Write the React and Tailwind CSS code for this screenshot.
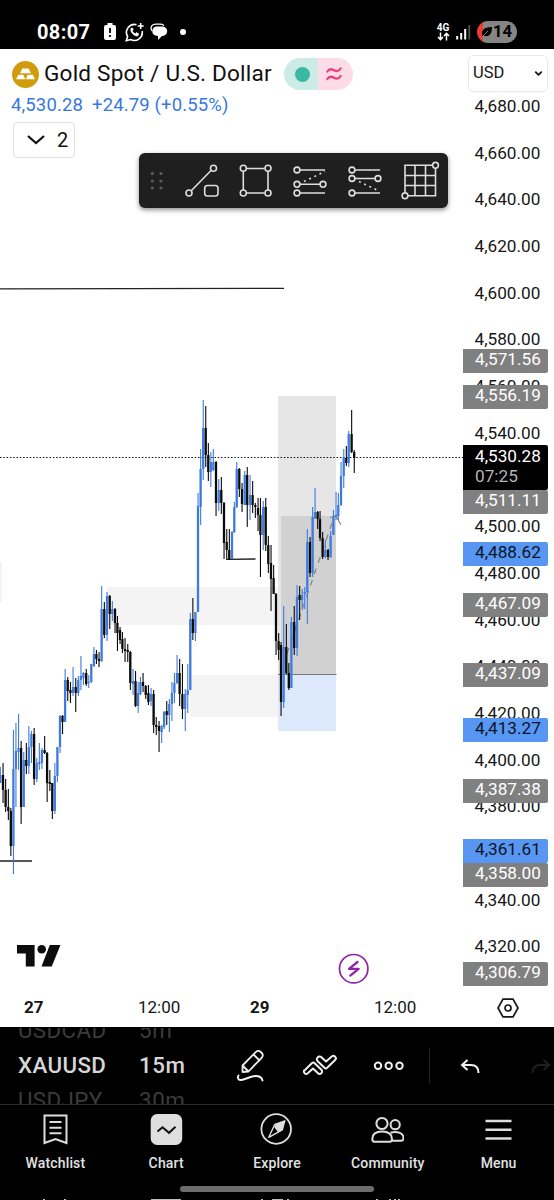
// App.jsx

import { ChevronDown } from 'lucide-react';

// x, high, low, body top, body bottom, direction (1 = up, 0 = down)
const candles = [
  [0.3, 767, 783, 775, 783, 1], [3, 763, 803, 775, 790, 0], [5.6, 779, 812, 790, 807, 0],
  [8.3, 789, 820, 807, 811, 0], [10.8, 808, 856, 811, 846, 0], [13.4, 730, 874, 769, 846, 1],
  [15.9, 723, 807, 751, 769, 1], [18.5, 714, 770, 748, 752, 1], [21.1, 741, 824, 748, 807, 0],
  [23.7, 752, 807, 760, 807, 1], [26.3, 743, 774, 760, 766, 0], [28.8, 726, 774, 747, 766, 1],
  [31.4, 731, 763, 734, 747, 1], [34.1, 728, 785, 734, 779, 0], [36.7, 758, 782, 763, 779, 1],
  [39.3, 743, 770, 762, 764, 1], [41.9, 748, 769, 750, 763, 1], [44.6, 736, 754, 750, 753, 0],
  [47.1, 752, 802, 753, 783, 0], [49.8, 770, 791, 782, 784, 0], [52.3, 783, 819, 783, 811, 0],
  [54.8, 763, 814, 776, 811, 1], [57.4, 747, 782, 747, 776, 1], [60, 715, 753, 716, 747, 1],
  [62.5, 715, 734, 716, 722, 0], [65.1, 669, 722, 680, 722, 1], [67.7, 677, 701, 680, 691, 0],
  [70.4, 682, 703, 690, 693, 0], [73, 667, 696, 687, 693, 1], [75.7, 678, 712, 687, 693, 0],
  [78.3, 676, 696, 680, 693, 1], [80.9, 656, 690, 676, 680, 1], [83.4, 672, 685, 673, 678, 1],
  [86.2, 669, 686, 673, 684, 0], [88.7, 675, 688, 682, 683, 1], [91.3, 664, 683, 664, 682, 1],
  [93.9, 647, 667, 654, 666, 1], [96.4, 650, 664, 654, 659, 0], [99, 652, 667, 659, 661, 0],
  [101.6, 586, 662, 609, 661, 1], [104.3, 602, 638, 609, 635, 0], [107, 592, 641, 596, 635, 1],
  [109.7, 595, 629, 596, 614, 0], [112.3, 601, 621, 609, 614, 1], [115, 608, 633, 609, 623, 0],
  [117.4, 616, 651, 623, 633, 0], [120, 627, 644, 630, 640, 0], [122.4, 632, 653, 639, 649, 0],
  [125, 638, 662, 649, 651, 0], [127.7, 644, 662, 650, 652, 0], [130.3, 651, 690, 652, 683, 0],
  [133, 669, 695, 681, 684, 1], [135.5, 671, 707, 681, 706, 0], [138.1, 682, 713, 693, 706, 1],
  [140.4, 677, 695, 682, 694, 1], [143, 673, 692, 682, 686, 0], [145.7, 685, 699, 686, 695, 0],
  [148.4, 685, 705, 693, 702, 0], [151, 688, 706, 694, 701, 1], [153.6, 690, 733, 694, 725, 0],
  [156.2, 717, 735, 725, 727, 0], [159, 721, 752, 726, 731, 0], [161.6, 725, 743, 726, 732, 1],
  [164.1, 711, 729, 712, 727, 1], [166.7, 701, 725, 711, 715, 0], [169.3, 699, 732, 704, 715, 1],
  [171.9, 682, 721, 693, 704, 1], [174.4, 673, 703, 683, 693, 1], [177, 655, 684, 673, 683, 1],
  [179.6, 659, 706, 673, 694, 0], [182.4, 664, 719, 694, 709, 0], [185.2, 689, 731, 694, 709, 1],
  [187.7, 664, 713, 690, 695, 1], [190.3, 613, 690, 619, 690, 1], [192.8, 598, 640, 619, 633, 0],
  [195.4, 612, 641, 612, 633, 1], [198, 493, 612, 506, 612, 1], [200.6, 449, 525, 469, 507, 1],
  [203.2, 400, 480, 428, 469, 1], [205.7, 406, 467, 428, 455, 0], [208.3, 443, 481, 455, 472, 0],
  [210.8, 452, 487, 462, 472, 1], [213.3, 449, 471, 462, 470, 1], [216, 461, 516, 462, 503, 0],
  [218.7, 479, 511, 490, 503, 1], [221.3, 477, 514, 490, 503, 0], [224, 502, 559, 503, 543, 0],
  [226.7, 529, 560, 542, 550, 0], [229.3, 529, 560, 550, 559, 0], [232, 531, 559, 532, 559, 1],
  [234.3, 502, 533, 507, 532, 1], [236.7, 462, 508, 469, 507, 1], [239.3, 468, 497, 469, 489, 0],
  [242, 483, 512, 489, 504, 0], [244.7, 471, 505, 475, 505, 1], [247.2, 467, 527, 475, 505, 0],
  [250, 475, 520, 495, 505, 1], [252.6, 481, 513, 495, 505, 0], [255.3, 503, 518, 505, 507, 0],
  [258, 498, 531, 508, 515, 0], [260.4, 498, 577, 515, 535, 0], [263.2, 501, 550, 507, 535, 1],
  [265.7, 498, 551, 507, 545, 0], [268.3, 536, 573, 545, 564, 0], [271, 545, 611, 563, 579, 0],
  [273.6, 565, 594, 578, 594, 0], [276, 593, 655, 594, 641, 0], [278.6, 633, 660, 641, 650, 0],
  [281, 642, 716, 645, 702, 0], [283.6, 606, 708, 647, 702, 1], [286.3, 624, 674, 647, 673, 0],
  [288.8, 663, 690, 673, 688, 0], [291.4, 617, 688, 622, 688, 1], [294.2, 606, 655, 622, 648, 0],
  [297, 585, 656, 597, 648, 1], [299.6, 586, 620, 595, 600, 0], [302.1, 589, 610, 595, 600, 1],
  [304.7, 587, 609, 592, 594, 1], [307.3, 529, 624, 542, 592, 1], [310, 537, 577, 542, 573, 0],
  [312.6, 507, 577, 517, 573, 1], [315, 488, 519, 512, 518, 1], [317.6, 511, 529, 512, 519, 0],
  [320, 511, 541, 519, 538, 0], [322.6, 532, 559, 538, 557, 0], [325.3, 540, 558, 550, 557, 1],
  [328, 549, 560, 550, 557, 0], [330.6, 531, 558, 536, 557, 1], [333.4, 510, 535, 517, 535, 1],
  [336, 492, 520, 515, 517, 1], [338.3, 493, 520, 505, 516, 1], [341, 462, 506, 476, 505, 1],
  [343.7, 449, 488, 457, 476, 1], [346.3, 446, 466, 458, 463, 0], [348.7, 431, 467, 434, 463, 1],
  [351.6, 410, 453, 434, 452, 0], [354.2, 450, 473, 452, 458, 0],
];

const ticks = [
  '4,680.00', '4,660.00', '4,640.00', '4,620.00', '4,600.00', '4,580.00', '4,560.00',
  '4,540.00', '4,520.00', '4,500.00', '4,480.00', '4,460.00', '4,440.00', '4,420.00',
  '4,400.00', '4,380.00', '4,360.00', '4,340.00', '4,320.00',
];

// top is measured from the top of the price scale
const levels = [
  { price: '4,571.56', top: 300, blue: false },
  { price: '4,556.19', top: 336, blue: false },
  { price: '4,511.11', top: 441, blue: false },
  { price: '4,488.62', top: 493, blue: true },
  { price: '4,467.09', top: 543.5, blue: false },
  { price: '4,437.09', top: 614, blue: false },
  { price: '4,413.27', top: 669, blue: true },
  { price: '4,387.38', top: 729.5, blue: false },
  { price: '4,358.00', top: 814, blue: false },
  { price: '4,361.61', top: 789.5, blue: true },
  { price: '4,306.79', top: 913, blue: false },
];

const StatusBar = () => (
  <div className="flex h-[49px] items-center bg-black pl-[37px] pr-[37px] pt-[15px] text-white">
    <span className="w-[54px] whitespace-nowrap text-[20px] font-bold leading-[24px] tracking-[0.350px]">08:07</span>
    <svg className="ml-[13px]" width="12" height="18" viewBox="0 0 12 18">
      <path d="M3.500 0h5v2H10a2 2 0 0 1 2 2v11a2 2 0 0 1-2 2H2a2 2 0 0 1-2-2V4a2 2 0 0 1 2-2h1.500z" fill="#fff" />
      <path d="M6 5v5M6 12v2" stroke="#000" strokeWidth="1.800" />
    </svg>
    <svg className="ml-[9px]" width="19" height="19" viewBox="0 0 19 19" fill="none" stroke="#fff">
      <path d="M11.500 1.700A8 8 0 0 0 2.600 13.500L1.300 17.700l4.400-1.200A8 8 0 0 0 17.200 8" strokeWidth="1.600" />
      <path d="M6 5.200c-1.500 3.300 3.200 8.700 7 7.600l.7-2-2.200-1.200-1.300 1.100C8.700 10 7.800 9 7.300 7.800l1-1.100L7.500 5z" fill="#fff" strokeWidth="0.600" />
      <path d="M15.700 0v6M12.700 3h6" strokeWidth="1.600" />
    </svg>
    <svg className="ml-[6px]" width="18" height="18" viewBox="0 0 18 18">
      <path d="M2 8C-.5 3.500 2.500 1.200 6 1.200h4c2 0 3 .4 4 1.200" fill="none" stroke="#fff" strokeWidth="1.300" />
      <path d="M7 3.500h4.500c3.500 0 5.700 2 5.700 4.700 0 2.700-2.200 4.600-5.200 4.800L8 17V13C4.500 13 2.300 11 2.300 8.300S4 3.500 7 3.500z" fill="#fff" />
    </svg>
    <span className="ml-[12px] h-[6px] w-[6px] rounded-full bg-white" />
    <div className="ml-auto flex w-[14px] flex-col items-center">
      <span className="text-[10px] font-bold leading-[9px]">4G</span>
      <svg width="13" height="9" viewBox="0 0 13 9" fill="none" stroke="#fff" strokeWidth="1.500">
        <path d="M3.500 0.500v7M1 5l2.500 2.600L6 5M9.500 8.500v-7M7 4l2.500-2.600L12 4" />
      </svg>
    </div>
    <svg className="ml-[6px]" width="15" height="16" viewBox="0 0 15 16">
      <path d="M1.200 12v3.500M5.200 9v6.500M9.200 5v10.500" stroke="#fff" strokeWidth="2" />
      <path d="M13.300 1v14.500" stroke="#4b544b" strokeWidth="1.800" />
    </svg>
    <div className="ml-[6px] flex h-[22px] w-[40px] items-center overflow-hidden rounded-full bg-[linear-gradient(90deg,#ee3b33_6px,#858585_6px)]">
      <svg className="ml-[4px]" width="12" height="12" viewBox="0 0 12 12">
        <path d="M1.500 10C0 5 2 1 11 1c0 6-2 10-7.500 9z" fill="#000" />
        <path d="M0.500 11.500L7 5" stroke="#858585" strokeWidth="1" />
      </svg>
      <span className="text-[16.500px] font-bold leading-[22px] text-black">14</span>
    </div>
  </div>
);

const Plot = () => (
  <svg className="absolute left-0 top-0" width="463" height="978" viewBox="0 49 463 978">
    {/* zones */}
    <g shapeRendering="crispEdges">
      <rect x="0" y="562" width="2" height="40" fill="#f4f4f4" />
      <rect x="107" y="587" width="171" height="38" fill="#f4f4f4" />
      <rect x="190" y="675" width="88" height="42" fill="#f4f4f4" />
      <rect x="278" y="396" width="58" height="279" fill="#e6e6e6" />
      <rect x="281" y="516" width="55" height="159" fill="#d1d1d1" />
      <rect x="278" y="675" width="58" height="56" fill="#dce9fc" />
    </g>
    <path d="M278 674.500h58.500" stroke="#777" strokeWidth="1" />
    {/* levels */}
    <path d="M0 288.800L284 288.300M0 861H32M227 559.300L255.500 559" stroke="#222" strokeWidth="1.300" />
    <path d="M0 457.500H463" stroke="#111" strokeWidth="1.200" strokeDasharray="1.500 1.800" />
    <path d="M283 665L332 523" stroke="#888" strokeWidth="1.300" strokeDasharray="6 6" fill="none" />
    <path d="M330 517.500L336 516L341 525" stroke="#888" strokeWidth="1.200" fill="none" />
    {candles.map(([x, high, low, top, bottom, up]) => (
      <g key={x} fill={up ? '#3f7bdc' : '#0b0b0b'}>
        <rect x={x - 0.5} y={high} width="1.100" height={low - high} />
        <rect x={x - 1.15} y={top} width="2.300" height={bottom - top} />
      </g>
    ))}
    {/* logo */}
    <g fill="#0c0c0c">
      <path d="M17 945H34.600V966.500H25.800V953.600H17z" />
      <circle cx="41.700" cy="949.300" r="4.300" />
      <path d="M49.800 945H60.500L51.700 966.500H41.500z" />
    </g>
    <circle cx="353.700" cy="968.700" r="14.200" fill="#fff" stroke="#8e24aa" strokeWidth="1.700" />
    <path d="M357.500 962l-8.500 6.800h9.600l-8.300 6.800" fill="none" stroke="#8e24aa" strokeWidth="2.300" strokeLinejoin="round" strokeLinecap="round" />
  </svg>
);

const Header = () => (
  <div className="relative pl-[12px] pt-[9px]">
    <div className="flex h-[32px] items-center">
      <svg width="27" height="27" viewBox="0 0 27 27">
        <circle cx="13.500" cy="13.500" r="13.500" fill="#d29b0b" />
        <path d="M10.400 7.500h6.200l2.400 4.700H8zM6.300 13.700h5l2 4.600H4zM15.700 13.700h5l2.300 4.600h-9.300z" fill="#fff" />
      </svg>
      <span className="ml-[5px] w-[228px] whitespace-nowrap text-[22.600px] leading-[30px] tracking-[0.200px] text-[#111]">Gold Spot / U.S. Dollar</span>
      <div className="ml-[12px] flex h-[32px] w-[69px] overflow-hidden rounded-full">
        <span className="flex w-[34px] items-center justify-center bg-[#cdebe6] pl-[3px]">
          <span className="h-[15px] w-[15px] rounded-full bg-[#3bb8a0]" />
        </span>
        <span className="flex flex-1 items-center bg-[#fddbe7] pl-[8px]">
          <svg width="16" height="14" viewBox="0 0 16 14" fill="none" stroke="#ee3d7c" strokeWidth="2.200" strokeLinecap="round">
            <path d="M1.300 4.500C4 .5 6.500 2.500 8 3.300S12.500 5 14.700 1.500M1.300 12C4 8 6.500 10 8 10.800S12.500 12.500 14.700 9" />
          </svg>
        </span>
      </div>
    </div>
    <div className="-ml-[1px] flex h-[32px] items-center whitespace-nowrap text-[18.500px] tracking-[0.140px] text-[#3878e0]">
      <span className="w-[81px]">4,530.28</span>
      <span>+24.79 (+0.55%)</span>
    </div>
    <div className="ml-[1px] flex h-[36px] w-[62px] items-center rounded-[4px] border-[1.500px] border-[#e2e2e2] bg-white pl-[12px] text-[20px] text-[#111]">
      <svg width="20" height="12" viewBox="0 0 20 12" fill="none" stroke="#111" strokeWidth="2.200">
        <path d="M2 2l8 7 8-7" />
      </svg>
      <span className="ml-[11px]">2</span>
    </div>
  </div>
);

const DrawingToolbar = () => (
  <div className="absolute left-[139px] top-[104px] flex h-[55px] w-[309px] items-center rounded-[6px] bg-[#1f1f1f] shadow-[0_2px_5px_rgba(0,0,0,0.450)]">
    <svg width="309" height="55" viewBox="139 153 309 55" fill="none" stroke="#dedede" strokeWidth="1.600">
      <g fill="#5c5c5c" stroke="none">
        {[173.5, 181, 188].map((y) => (
          <g key={y}>
            <circle cx="152.300" cy={y} r="1.600" />
            <circle cx="161" cy={y} r="1.600" />
          </g>
        ))}
      </g>
      {/* trend line */}
      <path d="M191.500 190.500L211 170.500" />
      <circle cx="189" cy="193" r="3" />
      <circle cx="213.500" cy="168.300" r="3" />
      <rect x="204.700" y="185.500" width="13.300" height="10.500" rx="2.800" />
      {/* rectangle */}
      <path d="M246.500 168.500h18M246.500 193h18M243.300 171.500v18.500M268 171.500v18.500" />
      <circle cx="243.300" cy="168.300" r="3" />
      <circle cx="268" cy="168.300" r="3" />
      <circle cx="243.300" cy="193" r="3" />
      <circle cx="268" cy="193" r="3" />
      {/* long position */}
      <path d="M300 170h25M300 184.300h20M300 193h25" />
      <path d="M304 181.500L325 171.500" strokeDasharray="2 3.700" />
      <circle cx="297" cy="170" r="2.900" />
      <circle cx="297" cy="184.300" r="2.900" />
      <circle cx="297" cy="193" r="2.900" />
      <circle cx="323" cy="184.300" r="2.900" fill="#1f1f1f" />
      {/* short position */}
      <path d="M355 170h25M355 178.500h20M355 193h25" />
      <path d="M359 181.500L379 191" strokeDasharray="2 3.700" />
      <circle cx="352" cy="170" r="2.900" />
      <circle cx="352" cy="178.500" r="2.900" />
      <circle cx="352" cy="193" r="2.900" />
      <circle cx="378" cy="178.500" r="2.900" fill="#1f1f1f" />
      {/* grid */}
      <path d="M405 192.500v-27.300h27.500M435.500 168.500v27.300h-27.500M405 175.500h30.500M405 185.500h30.500M415 165.200v30.600M425.500 165.200v30.600" />
      <circle cx="435.500" cy="165.300" r="2.900" />
      <circle cx="405" cy="195.800" r="2.900" />
    </svg>
  </div>
);

const PriceScale = () => (
  <div className="relative ml-auto w-[91px] text-[17.200px] text-[#161616]">
    <div className="ml-[5px] mt-[6px] flex h-[37px] w-[80px] items-center rounded-[5px] border border-[#e9e9e9] pl-[4px] text-[16.500px]">
      <span className="w-[33px]">USD</span>
      <ChevronDown className="ml-[27px]" size={11} strokeWidth={4} />
    </div>
    <div className="-mt-[8.500px] pl-[11.500px]">
      {ticks.map((tick) => (
        <div key={tick} className="flex h-[46.700px] items-center">{tick}</div>
      ))}
    </div>
    {levels.map(({ price, top, blue }) => (
      <div
        key={price}
        style={{ top }}
        className={`absolute left-0 flex h-[24px] w-[85px] items-center rounded-r-[2px] pb-[2px] pl-[12px] ${blue ? 'bg-[#5797f3] text-[#0c1524]' : 'bg-[#808080] text-white'}`}
      >
        {price}
      </div>
    ))}
    <div className="absolute left-0 top-[396px] h-[44.500px] w-[85px] rounded-r-[2px] bg-black pl-[12px] pt-[1px] leading-[20px] text-white">
      <div>4,530.28</div>
      <div className="text-[#b5b5b5]">07:25</div>
    </div>
  </div>
);

const TimeScale = () => (
  <div className="relative mt-auto flex h-[41px] items-center pt-[2px] text-[17px] text-[#161616]">
    <span className="ml-[24px] w-[114px] font-bold">27</span>
    <span className="w-[112px]">12:00</span>
    <span className="w-[124px] font-bold">29</span>
    <span className="w-[123px]">12:00</span>
    <svg width="22" height="20" viewBox="0 0 22 20" fill="none" stroke="#161616" strokeWidth="1.700">
      <path d="M6 1.200h10L21 10l-5 8.800H6L1 10z" />
      <circle cx="11" cy="10" r="3" />
    </svg>
  </div>
);

const Wheel = ({ items, className }) => (
  <div className={`flex h-[76px] flex-col justify-center overflow-hidden leading-[35px] ${className}`}>
    {items.map((item, i) => (
      <div key={item} className={`h-[35px] shrink-0 ${i === 1 ? 'font-medium text-[#d6d6d6]' : 'text-[#3c3c3c]'}`}>{item}</div>
    ))}
  </div>
);

const BottomToolbar = () => (
  <div className="flex h-[78px] items-center border-b border-[#2a2a2a] bg-black">
    <Wheel items={['USDCAD', 'XAUUSD', 'USDJPY']} className="ml-[18px] w-[121px] text-[22.300px] tracking-[0.400px]" />
    <Wheel items={['5m', '15m', '30m']} className="w-[94px] text-[22.300px] tracking-[0.600px]" />
    <svg width="321" height="76" viewBox="233 1028 321 76" fill="none" stroke="#f0f0f0" strokeWidth="2" strokeLinecap="round" strokeLinejoin="round">
      {/* pencil */}
      <path d="M242.500 1072v-6.500l13.500-13.700a3.200 3.200 0 0 1 4.600 0l1.200 1.200a3.200 3.200 0 0 1 0 4.600L248.500 1071.500zM253.500 1054.500l6 6M243 1066l5 5" strokeWidth="1.800" />
      <path d="M238.500 1075.500c-1.500 2 0 5 3 4.500 5-.7 9-4 14-4 4 0 6.500 2 7 4.500" />
      {/* patterns */}
      <path d="M304.500 1070.500l7.500-7.500q1.200-1 2.400 0l7 6.800a2.400 2.400 0 0 1-3.400 3.400l-5-4.700-5.500 5a2.400 2.400 0 0 1-3.500-3z" />
      <path d="M317.500 1057.700a2.400 2.400 0 0 1 3.600-.7l5 4.600 5.600-5a2.400 2.400 0 0 1 3.400 3.400l-8.200 8q-1 1-2.200 0l-7-6.800a2.400 2.400 0 0 1-.2-3.500z" />
      {/* more */}
      <circle cx="378" cy="1065.800" r="3.200" />
      <circle cx="388.700" cy="1065.800" r="3.200" />
      <circle cx="399.500" cy="1065.800" r="3.200" />
      <path d="M429.500 1049v34" stroke="#262626" strokeWidth="1" />
      {/* undo and redo */}
      <path d="M467.500 1060l-5.500 5 5.500 5M462.500 1065h8.500c5 0 7.500 3 7.500 8" strokeLinecap="butt" strokeLinejoin="miter" />
      <path d="M543.500 1060l5.500 5-5.500 5M548.500 1065H540c-5 0-7.500 3-7.500 8" stroke="#202020" strokeLinecap="butt" strokeLinejoin="miter" />
    </svg>
  </div>
);

const navItems = [
  {
    label: 'Watchlist',
    icon: (
      <>
        <path d="M5.500 2.500h22v27.500l-11-4-11 4z" />
        <path d="M10.500 9h12M10.500 14.700h12M10.500 20.300h12" />
      </>
    ),
  },
  {
    label: 'Chart',
    icon: (
      <>
        <rect x="0.700" y="1" width="31.500" height="31" rx="6.500" fill="#dedede" stroke="none" />
        <path d="M7.500 18.500l5-4.300 6.500 5.600 6.500-6" stroke="#111" />
      </>
    ),
  },
  {
    label: 'Explore',
    icon: (
      <>
        <circle cx="16.200" cy="16" r="14.800" strokeWidth="1.800" />
        <path d="M24.800 7.800l-2.500 9-13.500 7.500 6-13z" strokeWidth="1.400" strokeLinejoin="round" />
        <path d="M24.800 7.800l-2.500 9-4 2.700-4-5.200 1.200-3z" fill="#dedede" stroke="none" />
      </>
    ),
  },
  {
    label: 'Community',
    icon: (
      <>
        <circle cx="11" cy="10.500" r="5.600" />
        <circle cx="24.200" cy="11.700" r="4.600" />
        <path d="M1.300 26c0-5.500 3.500-7.500 9.700-7.500s10 2 10 7.500c0 1.600-.5 2.700-2 2.700H3.300c-1.500 0-2-1-2-2.700z" />
        <path d="M19.500 19.700c6-2 13 0 13 5.300 0 1.500-.7 2.700-2.200 2.700H21" />
      </>
    ),
  },
  {
    label: 'Menu',
    icon: <path d="M3.500 8h26M3.500 16.800h26M3.500 25.500h26" strokeWidth="2.600" />,
  },
];

const BottomNav = () => (
  <div className="relative flex-1 overflow-hidden bg-black">
    <div className="grid grid-cols-5 pt-[8px]">
      {navItems.map(({ label, icon }) => (
        <div key={label} className="flex flex-col items-center">
          <svg width="33" height="34" viewBox="0 0 33 34" fill="none" stroke="#dedede" strokeWidth="2">{icon}</svg>
          <span className="mt-[6px] text-[14px] font-medium leading-[20px] tracking-[0.150px] text-[#e2e2e2]">{label}</span>
        </div>
      ))}
    </div>
    <div className="mx-auto mt-[13px] h-[6px] w-[194px] rounded-full bg-[#6c6c6c]" />
    <svg className="absolute bottom-0 left-0" width="554" height="2" viewBox="0 0 554 2">
      <path d="M43 1.500h2M64 1.500h2M151 1.500h30M261 1.500h2M272 1.500h11M287 1.500h2M376 1.500h2M389 1.500h2M394 1.500h2M398 1.500h2" stroke="#bdbdbd" strokeWidth="1" />
    </svg>
  </div>
);

const App = () => {
  return (
    <div className="flex h-[1200px] w-[554px] flex-col overflow-hidden bg-black font-[Roboto,sans-serif]">
      <StatusBar />
      <div className="relative flex h-[978px] flex-col bg-white">
        <Plot />
        <div className="flex h-[937px]">
          <Header />
          <PriceScale />
        </div>
        <TimeScale />
        <DrawingToolbar />
      </div>
      <BottomToolbar />
      <BottomNav />
    </div>
  );
};

export default App;
